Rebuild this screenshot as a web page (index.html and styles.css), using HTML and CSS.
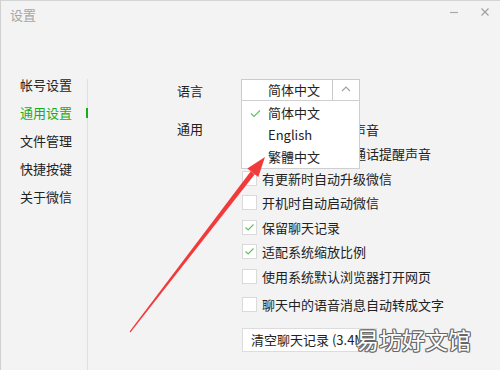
FILE: index.html
```html
<!DOCTYPE html>
<html lang="zh-CN">

<head>
    <meta charset="UTF-8">
    <meta name="viewport" content="width=device-width, initial-scale=1.0">
    <title>设置</title>
    <link rel="stylesheet" href="styles.css">
</head>

<body>
    <div class="window">
        <div class="titlebar">
            <div class="title">设置</div>
            <div class="controls">
                <span class="ctrl">
                    <svg width="10" height="10" viewBox="0 0 10 10"><line x1="1" y1="5.5" x2="9" y2="5.5" stroke="#a8a8a8" stroke-width="1.2"/></svg>
                </span>
                <span class="ctrl">
                    <svg width="10" height="10" viewBox="0 0 10 10"><path d="M1.5 1.5 L8.5 8.5 M8.5 1.5 L1.5 8.5" stroke="#a0a0a0" stroke-width="1.2" fill="none"/></svg>
                </span>
            </div>
        </div>

        <div class="main">
            <aside class="sidebar">
                <ul class="nav">
                    <li>帐号设置</li>
                    <li class="active">通用设置</li>
                    <li>文件管理</li>
                    <li>快捷按键</li>
                    <li>关于微信</li>
                </ul>
            </aside>

            <section class="content">
                <div class="setting-row">
                    <div class="label lang-label">语言</div>
                    <div class="select">
                        <div class="select-value">简体中文</div>
                        <div class="select-arrow">
                            <svg width="10" height="6" viewBox="0 0 10 6"><path d="M1 5 L5 1 L9 5" stroke="#a0a0a0" stroke-width="1.1" fill="none"/></svg>
                        </div>
                        <ul class="dropdown">
                            <li>
                                <span class="mark">
                                    <svg width="11" height="9" viewBox="0 0 11 9"><path d="M1 4.5 L4 7.5 L10 1.5" stroke="#62c462" stroke-width="1.2" fill="none"/></svg>
                                </span>简体中文
                            </li>
                            <li><span class="mark"></span>English</li>
                            <li><span class="mark"></span>繁體中文</li>
                        </ul>
                    </div>
                </div>

                <div class="setting-row general">
                    <div class="label">通用</div>
                    <div class="options">
                        <div class="option"><span class="checkbox"></span>开启新消息提醒声音</div>
                        <div class="option"><span class="checkbox"></span>开启语音和视频通话提醒声音</div>
                        <div class="option"><span class="checkbox"></span>有更新时自动升级微信</div>
                        <div class="option"><span class="checkbox"></span>开机时自动启动微信</div>
                        <div class="option">
                            <span class="checkbox">
                                <svg width="13" height="13" viewBox="0 0 13 13"><path d="M2.5 6.5 L5.2 9 L10.5 3.5" stroke="#62c462" stroke-width="1.2" fill="none"/></svg>
                            </span>保留聊天记录
                        </div>
                        <div class="option">
                            <span class="checkbox">
                                <svg width="13" height="13" viewBox="0 0 13 13"><path d="M2.5 6.5 L5.2 9 L10.5 3.5" stroke="#62c462" stroke-width="1.2" fill="none"/></svg>
                            </span>适配系统缩放比例
                        </div>
                        <div class="option"><span class="checkbox"></span>使用系统默认浏览器打开网页</div>
                        <div class="option spaced"><span class="checkbox"></span>聊天中的语音消息自动转成文字</div>
                        <div class="btn-clear">清空聊天记录 (3.4M)</div>
                    </div>
                </div>
            </section>
        </div>

        <!-- 标注箭头 -->
        <svg class="annotation" width="500" height="370" viewBox="0 0 500 370">
            <polygon points="129.6,331.6 130.4,332.4 254.8,174.3 250.8,171.3" fill="#f23a3a"/>
            <polygon points="265,157 247.3,168.5 258.3,177.1" fill="#f23a3a"/>
        </svg>

        <div class="watermark">易坊好文馆</div>
    </div>
</body>

</html>
```

FILE: styles.css
```css
body {
    margin: 0;
    padding: 0;
    background-color: #f3f3f3;
    font-family: "Noto Sans CJK SC", "Noto Sans", sans-serif;
    font-size: 13px;
    color: #222;
}

ul {
    list-style-type: none;
    margin: 0;
    padding: 0;
}

.window {
    position: relative;
    width: 500px;
    height: 370px;
    box-sizing: border-box;
    border-top: 1px solid #d4d4d4;
    border-left: 1px solid #d0d0d0;
    background-color: #f3f3f3;
    display: flex;
    flex-direction: column;
    overflow: hidden;
}

.titlebar {
    height: 78px;
    flex-shrink: 0;
    display: flex;
    justify-content: space-between;
    align-items: flex-start;
    padding-left: 9px;
}

.title {
    margin-top: 4px;
    line-height: 20px;
    color: #a6a6a6;
}

.controls {
    display: flex;
}

.ctrl {
    width: 31px;
    height: 22px;
    display: flex;
    align-items: center;
    justify-content: center;
}

.main {
    flex: 1;
    display: flex;
}

.sidebar {
    width: 87px;
    box-sizing: border-box;
    border-right: 1px solid #e0e0e0;
    padding-left: 19px;
    flex-shrink: 0;
}

.nav {
    margin-top: -4px;
}

.nav li {
    position: relative;
    line-height: 20px;
    margin-bottom: 8px;
}

.nav li.active {
    color: #1aad19;
}

.nav li.active::after {
    content: "";
    position: absolute;
    right: -1px;
    top: 5px;
    width: 2px;
    height: 10px;
    background-color: #1aad19;
}

.content {
    flex: 1;
    padding-left: 89px;
}

.setting-row {
    display: flex;
}

.label {
    width: 64px;
    flex-shrink: 0;
    line-height: 24.5px;
}

.lang-label {
    line-height: 22px;
    padding-top: 1px;
}

.select {
    position: relative;
    width: 119px;
    height: 22px;
    box-sizing: border-box;
    border: 1px solid #cbcbcb;
    background-color: #fff;
    display: flex;
}

.select-value {
    width: 90px;
    padding-left: 26px;
    box-sizing: border-box;
    line-height: 20px;
}

.select-arrow {
    flex: 1;
    border-left: 1px solid #cbcbcb;
    display: flex;
    align-items: center;
    justify-content: center;
    padding-bottom: 2px;
}

.dropdown {
    position: absolute;
    z-index: 2;
    top: 100%;
    left: -1px;
    width: 119px;
    height: 69px;
    box-sizing: border-box;
    border: 1px solid #cfcfcf;
    background-color: #fff;
    padding-top: 1px;
}

.dropdown li {
    height: 22px;
    line-height: 22px;
    display: flex;
    align-items: center;
    padding-left: 8px;
}

.mark {
    width: 18px;
    display: flex;
    align-items: center;
}

.general {
    margin-top: 15px;
}

.options {
    margin-left: 1px;
}

.option {
    height: 24.5px;
    display: flex;
    align-items: center;
    white-space: nowrap;
}

.option.spaced {
    margin-top: 3.5px;
}

.checkbox {
    width: 15px;
    height: 15px;
    box-sizing: border-box;
    border: 1px solid #dadada;
    background-color: #fff;
    margin-right: 5px;
    display: flex;
    align-items: center;
    justify-content: center;
}

.btn-clear {
    margin-top: 11.5px;
    width: 135px;
    height: 24px;
    box-sizing: border-box;
    border: 1px solid #dcdcdc;
    background-color: #fff;
    line-height: 22px;
    padding-left: 8px;
    white-space: nowrap;
    overflow: hidden;
}

.annotation {
    position: absolute;
    z-index: 5;
    left: -1px;
    top: -1px;
    pointer-events: none;
}

.watermark {
    position: absolute;
    z-index: 6;
    left: 355px;
    top: 323px;
    font-size: 23px;
    line-height: 30px;
    color: #fff;
    text-shadow: 1px 0 0 #666, -1px 0 0 #666, 0 1px 0 #666, 0 -1px 0 #666,
        1px 1px 0 #777, -1px -1px 0 #777, 1px -1px 0 #777, -1px 1px 0 #777;
}
```
